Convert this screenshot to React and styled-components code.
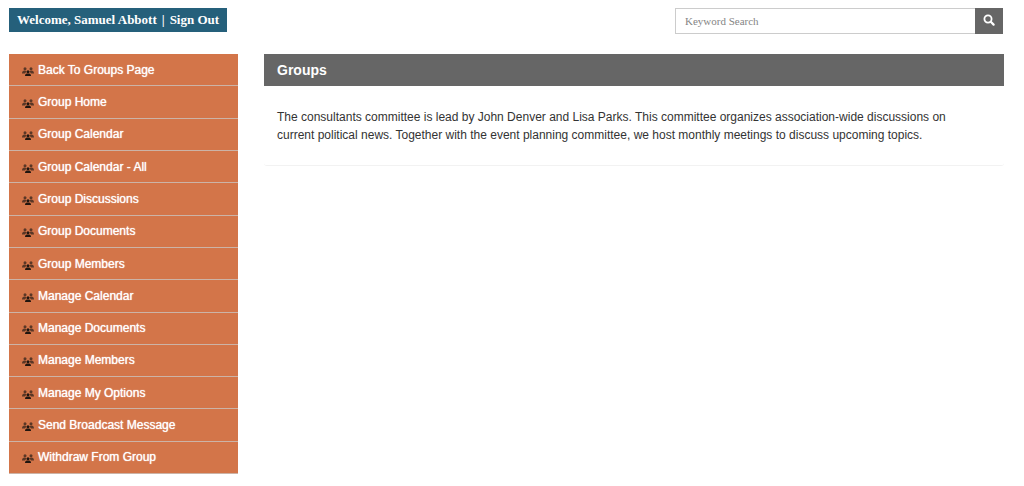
import React from 'react';
import styled, { createGlobalStyle } from 'styled-components';

const sans = '"Liberation Sans", Arial, sans-serif';
const serif = '"Liberation Serif", "Times New Roman", serif';

const GlobalStyle = createGlobalStyle`
  *, *::before, *::after { box-sizing: border-box; }
  body { margin: 0; background: #fff; color: #333; font: 12px/18px ${sans}; }
`;

const Page = styled.div`
  padding: 8px 20px 12px 9px;
`;

const TopBar = styled.header`
  display: flex;
  justify-content: space-between;
  align-items: flex-start;
  margin-bottom: 20px;
`;

const Account = styled.div`
  display: flex;
  gap: 5px;
  padding: 0 8px;
  background: #25607b;
  color: #fff;
  font: bold 13px/24px ${serif};
`;

const SignOut = styled.a`
  color: inherit;
  text-decoration: none;
`;

const SearchForm = styled.form`
  display: flex;
  width: 33%;
  max-width: 328px;
  height: 26px;
  margin-right: 1px;
`;

const SearchInput = styled.input`
  flex: 1;
  min-width: 0;
  padding: 0 9px;
  border: 1px solid #ccc;
  border-right: 0;
  border-radius: 0;
  background: #fff;
  font: 11px ${serif};
  &::placeholder { color: #858585; opacity: 1; }
`;

const SearchButton = styled.button`
  display: flex;
  align-items: center;
  justify-content: center;
  width: 28px;
  padding: 0 0 2px;
  border: 0;
  background: #666;
  color: #fff;
`;

const Columns = styled.div`
  display: grid;
  grid-template-columns: minmax(200px, 229fr) 740fr;
  gap: 26px;
  align-items: start;
`;

const Menu = styled.ul`
  display: flex;
  flex-direction: column;
  min-height: 420px;
  margin: 0;
  padding: 0;
  list-style: none;
`;

const MenuItem = styled.li`
  display: flex;
  flex: 1;
  border-bottom: 1px solid #ccb3a6;
  background: #d37549;
`;

const MenuLink = styled.a`
  display: flex;
  flex: 1;
  align-items: center;
  gap: 4px;
  padding: 0 13px;
  color: #fff;
  text-decoration: none;
  text-shadow: 0 0 1px #fff;
`;

const Panel = styled.section`
  border-bottom: 1px solid #f2f2f2;
  border-radius: 0 0 3px 3px;
`;

const PanelTitle = styled.h1`
  margin: 0;
  padding: 0 13px;
  background: #666;
  color: #fff;
  font: bold 14px/32px ${sans};
`;

const PanelText = styled.p`
  margin: 0;
  padding: 22px 26px 21px 13px;
`;

const IconBox = styled.span`
  display: flex;
  padding-top: 3px;
`;

const GroupIcon = () => (
  <svg width="12" height="9" viewBox="0 0 24 18" aria-hidden="true">
    <g fill="#5a3726">
      <circle cx="6" cy="3.5" r="3" />
      <circle cx="18" cy="3.5" r="3" />
      <path d="M0 13c0-4 2-6 5-6 2 0 3 1 4 2l-3 4zM24 13c0-4-2-6-5-6-2 0-3 1-4 2l3 4z" />
    </g>
    <g fill="#20150f">
      <circle cx="12" cy="9.5" r="3" />
      <path d="M6 18c0-4 2-5 6-5s6 1 6 5z" />
    </g>
  </svg>
);

const SearchIcon = () => (
  <svg width="12" height="12" viewBox="0 0 12 12" fill="none" stroke="currentColor" aria-hidden="true">
    <circle cx="5" cy="5" r="3.6" strokeWidth="1.8" />
    <path d="M7.8 7.8l2.8 2.8" strokeWidth="2.2" strokeLinecap="round" />
  </svg>
);

const menuItems = [
  'Back To Groups Page',
  'Group Home',
  'Group Calendar',
  'Group Calendar - All',
  'Group Discussions',
  'Group Documents',
  'Group Members',
  'Manage Calendar',
  'Manage Documents',
  'Manage Members',
  'Manage My Options',
  'Send Broadcast Message',
  'Withdraw From Group',
];

export default function App() {
  return (
    <Page>
      <GlobalStyle />
      <TopBar>
        <Account>
          <span>Welcome, Samuel Abbott</span>
          <span>|</span>
          <SignOut href="#sign-out">Sign Out</SignOut>
        </Account>
        <SearchForm role="search">
          <SearchInput type="text" placeholder="Keyword Search" aria-label="Keyword Search" />
          <SearchButton type="button" aria-label="Search">
            <SearchIcon />
          </SearchButton>
        </SearchForm>
      </TopBar>
      <Columns>
        <nav aria-label="Group menu">
          <Menu>
            {menuItems.map((label) => (
              <MenuItem key={label}>
                <MenuLink href="#">
                  <IconBox>
                    <GroupIcon />
                  </IconBox>
                  <span>{label}</span>
                </MenuLink>
              </MenuItem>
            ))}
          </Menu>
        </nav>
        <main>
          <Panel>
            <PanelTitle>Groups</PanelTitle>
            <PanelText>
              The consultants committee is lead by John Denver and Lisa Parks. This committee organizes
              association-wide discussions on current political news. Together with the event planning
              committee, we host monthly meetings to discuss upcoming topics.
            </PanelText>
          </Panel>
        </main>
      </Columns>
    </Page>
  );
}
